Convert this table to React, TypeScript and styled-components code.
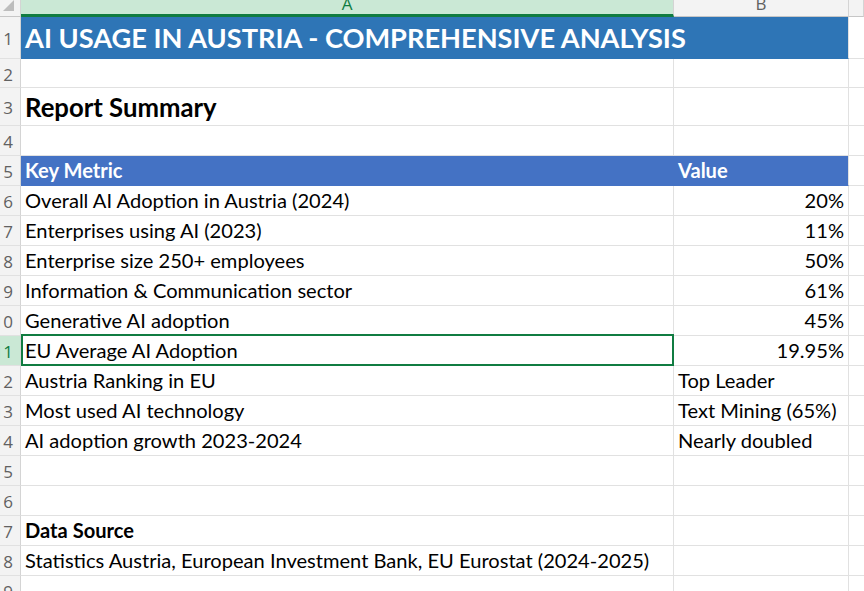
import React, { FC } from 'react';
import styled, { createGlobalStyle, css } from 'styled-components';

const GlobalStyle = createGlobalStyle`
  html, body {
    margin: 0;
    padding: 0;
    background: #ffffff;
    overflow: hidden;
  }
`;

const GRID = '#e1e1e1';
const GREEN = '#107c41';

const Sheet = styled.div`
  display: grid;
  grid-template-columns: 21px 653px 175px 1fr;
  grid-template-rows: 17px 42px 29px 38px 30px 30px repeat(14, 30px);
  width: 864px;
  height: 591px;
  overflow: hidden;
  font-family: Lato, 'Liberation Sans', sans-serif;
  color: #000;
`;

const Corner = styled.div`
  position: relative;
  background: #f3f3f3;
  border-right: 1px solid #d4d4d4;
  border-bottom: 1px solid #c6c6c6;
  box-sizing: border-box;

  &::after {
    content: '';
    position: absolute;
    left: 3px;
    top: 0;
    width: 0;
    height: 0;
    border-left: 11px solid transparent;
    border-bottom: 11px solid #bdbdbd;
  }
`;

const ColHeader = styled.div<{ $selected?: boolean }>`
  display: flex;
  justify-content: center;
  align-items: flex-start;
  overflow: hidden;
  box-sizing: border-box;
  background: #f3f3f3;
  border-right: 1px solid #d4d4d4;
  border-bottom: 1px solid #c6c6c6;
  font-family: 'Open Sans', 'Noto Sans', sans-serif;
  font-size: 17px;
  line-height: 17px;
  color: #616161;

  span {
    margin-top: -5px;
  }

  ${({ $selected }) =>
    $selected &&
    css`
      background: #cae8d5;
      color: ${GREEN};
      border-bottom: 3px solid ${GREEN};
    `}
`;

const RowHeader = styled.div<{ $selected?: boolean }>`
  display: flex;
  justify-content: flex-end;
  align-items: center;
  overflow: hidden;
  box-sizing: border-box;
  padding: 2px 7px 0 0;
  background: #f3f3f3;
  border-right: 1px solid #d4d4d4;
  border-bottom: 1px solid ${GRID};
  font-family: 'Open Sans', 'Noto Sans', sans-serif;
  font-size: 17px;
  color: #616161;
  white-space: nowrap;

  ${({ $selected }) =>
    $selected &&
    css`
      background: #cae8d5;
      color: ${GREEN};
    `}
`;

type CellProps = {
  $fill?: string;
  $bold?: boolean;
  $right?: boolean;
  $size?: number;
  $span?: number;
  $pad?: number;
  $merged?: boolean;
  $selected?: boolean;
};

const Cell = styled.div<CellProps>`
  position: relative;
  display: flex;
  align-items: flex-end;
  justify-content: ${({ $right }) => ($right ? 'flex-end' : 'flex-start')};
  box-sizing: border-box;
  padding: 0 4px ${({ $pad }) => $pad ?? 3}px 4px;
  grid-column: span ${({ $span }) => $span ?? 1};
  background: ${({ $fill }) => $fill ?? 'transparent'};
  color: ${({ $fill }) => ($fill ? '#ffffff' : '#000000')};
  border-right: 1px solid ${({ $fill, $merged }) => ($merged ? $fill : GRID)};
  border-bottom: 1px solid ${({ $fill }) => $fill ?? GRID};
  font-size: ${({ $size }) => $size ?? 20.1}px;
  font-weight: ${({ $bold }) => ($bold ? 700 : 400)};
  line-height: 1.2;
  white-space: nowrap;

  ${({ $selected }) =>
    $selected &&
    css`
      &::after {
        content: '';
        position: absolute;
        top: -2px;
        left: 0;
        right: -1px;
        bottom: -1px;
        border: 2px solid ${GREEN};
        pointer-events: none;
      }
    `}
`;

const Spare = styled.div`
  border-bottom: 1px solid ${GRID};
`;

const TITLE_BLUE = '#2e75b6';
const HEAD_BLUE = '#4472c4';

const metrics: [string, string, boolean][] = [
  ['Overall AI Adoption in Austria (2024)', '20%', true],
  ['Enterprises using AI (2023)', '11%', true],
  ['Enterprise size 250+ employees', '50%', true],
  ['Information & Communication sector', '61%', true],
  ['Generative AI adoption', '45%', true],
  ['EU Average AI Adoption', '19.95%', true],
  ['Austria Ranking in EU', 'Top Leader', false],
  ['Most used AI technology', 'Text Mining (65%)', false],
  ['AI adoption growth 2023-2024', 'Nearly doubled', false],
];

const SELECTED_ROW = 11;

const App: FC = () => {
  return (
    <>
      <GlobalStyle />
      <Sheet>
        <Corner />
        <ColHeader $selected>
          <span>A</span>
        </ColHeader>
        <ColHeader>
          <span>B</span>
        </ColHeader>
        <ColHeader />

        <RowHeader>1</RowHeader>
        <Cell $fill={TITLE_BLUE} $bold $size={27.2} $span={2} $pad={3}>
          AI USAGE IN AUSTRIA - COMPREHENSIVE ANALYSIS
        </Cell>
        <Spare />

        <RowHeader>2</RowHeader>
        <Cell />
        <Cell />
        <Spare />

        <RowHeader>3</RowHeader>
        <Cell $bold $size={25.7} $pad={2}>
          Report Summary
        </Cell>
        <Cell />
        <Spare />

        <RowHeader>4</RowHeader>
        <Cell />
        <Cell />
        <Spare />

        <RowHeader>5</RowHeader>
        <Cell $fill={HEAD_BLUE} $bold $merged>
          Key Metric
        </Cell>
        <Cell $fill={HEAD_BLUE} $bold>
          Value
        </Cell>
        <Spare />

        {metrics.map(([label, value, numeric], i) => {
          const row = i + 6;
          return (
            <React.Fragment key={row}>
              <RowHeader $selected={row === SELECTED_ROW}>{row}</RowHeader>
              <Cell $selected={row === SELECTED_ROW}>{label}</Cell>
              <Cell $right={numeric}>{value}</Cell>
              <Spare />
            </React.Fragment>
          );
        })}

        <RowHeader>15</RowHeader>
        <Cell />
        <Cell />
        <Spare />

        <RowHeader>16</RowHeader>
        <Cell />
        <Cell />
        <Spare />

        <RowHeader>17</RowHeader>
        <Cell $bold>Data Source</Cell>
        <Cell />
        <Spare />

        <RowHeader>18</RowHeader>
        <Cell>
          Statistics Austria, European Investment Bank, EU Eurostat (2024-2025)
        </Cell>
        <Cell />
        <Spare />

        <RowHeader>19</RowHeader>
        <Cell />
        <Cell />
        <Spare />
      </Sheet>
    </>
  );
};

export default App;
